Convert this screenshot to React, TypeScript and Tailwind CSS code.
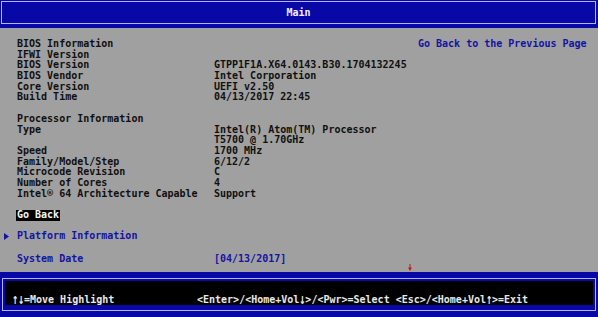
const rows: { label?: string; value?: string; head?: boolean }[] = [
  { label: "BIOS Information", head: true },
  { label: "IFWI Version" },
  { label: "BIOS Version", value: "GTPP1F1A.X64.0143.B30.1704132245" },
  { label: "BIOS Vendor", value: "Intel Corporation" },
  { label: "Core Version", value: "UEFI v2.50" },
  { label: "Build Time", value: "04/13/2017 22:45" },
  {},
  { label: "Processor Information", head: true },
  { label: "Type", value: "Intel(R) Atom(TM) Processor" },
  { value: "T5700 @ 1.70GHz" },
  { label: "Speed", value: "1700 MHz" },
  { label: "Family/Model/Step", value: "6/12/2" },
  { label: "Microcode Revision", value: "C" },
  { label: "Number of Cores", value: "4" },
  { label: "Intel® 64 Architecture Capable", value: "Support" },
  {},
];

function Row({ children }: { children?: React.ReactNode }) {
  return <div className="flex h-[10.7px] items-center leading-[10.7px] whitespace-pre">{children}</div>;
}

// mono arrow stretched up so it fills the cell like the BIOS font
function Arr({ up }: { up?: boolean }) {
  return <span className="inline-block w-[6px] scale-y-[1.5] text-center">{up ? "↑" : "↓"}</span>;
}

export default function App() {
  return (
    <div className="flex h-[317px] w-[598px] flex-col overflow-hidden bg-[#a0a0a0] font-['DejaVu_Sans_Mono',monospace] text-[10px] font-bold">
      {/* title bar */}
      <div className="h-[28px] shrink-0 bg-[#0808a6] pl-[1px] pt-[1px]">
        <div className="flex h-[23px] w-[595px] items-center justify-center border border-[#b4b4ff] text-[#f0f0ff]">
          Main
        </div>
      </div>

      {/* body */}
      <div className="relative flex flex-1 pt-[11px]">
        <div className="w-[418px]">
          {rows.map((r, i) => (
            <Row key={i}>
              <span className="w-[197px] pl-[17px] box-content text-[#101010]">{r.label ?? ""}</span>
              <span className="text-[#101010]">{r.value ?? ""}</span>
            </Row>
          ))}
          <Row>
            <span className="ml-[16px] bg-black pl-[1px] pr-[1px] text-[#f4f4f4]">Go Back</span>
          </Row>
          <Row />
          <Row>
            <svg width="5" height="7" viewBox="0 0 5 7" className="ml-[4px] mr-[8px]">
              <polygon points="0,0 5,3.5 0,7" fill="#1414a4" />
            </svg>
            <span className="text-[#1414a4]">Platform Information</span>
          </Row>
          <Row />
          <div className="flex h-[11.4px] items-center whitespace-pre">
            <span className="w-[197px] pl-[17px] box-content text-[#1414a4]">System Date</span>
            <span className="text-[#1414a4]">[04/13/2017]</span>
          </div>
        </div>
        <div>
          <Row>
            <span className="text-[#1414a4]">Go Back to the Previous Page</span>
          </Row>
        </div>
        <svg width="4" height="7" viewBox="0 0 4 7" className="absolute left-[408px] top-[236px]">
          <rect x="1.5" y="0" width="1" height="4" fill="#d01010" />
          <polygon points="0,3.5 4,3.5 2,7" fill="#d01010" />
        </svg>
      </div>

      {/* help bar */}
      <div className="h-[45px] shrink-0 bg-[#0808a6] pl-[2px] pt-[6px]">
        <div className="h-[33px] w-[594px] border border-[#b4b4ff] px-[2px] pt-[2px]">
          <div className="flex h-[24px] items-start bg-black pl-[7px] pt-[14px] leading-[10.7px] whitespace-pre text-[#e8e8e8]">
            <span className="w-[185px]">
              <Arr up />
              <Arr />
              =Move Highlight
            </span>
            <span>
              {"<Enter>/<Home+Vol"}
              <Arr />
              {">/<Pwr>=Select <Esc>/<Home+Vol"}
              <Arr up />
              {">=Exit"}
            </span>
          </div>
        </div>
      </div>
    </div>
  );
}
